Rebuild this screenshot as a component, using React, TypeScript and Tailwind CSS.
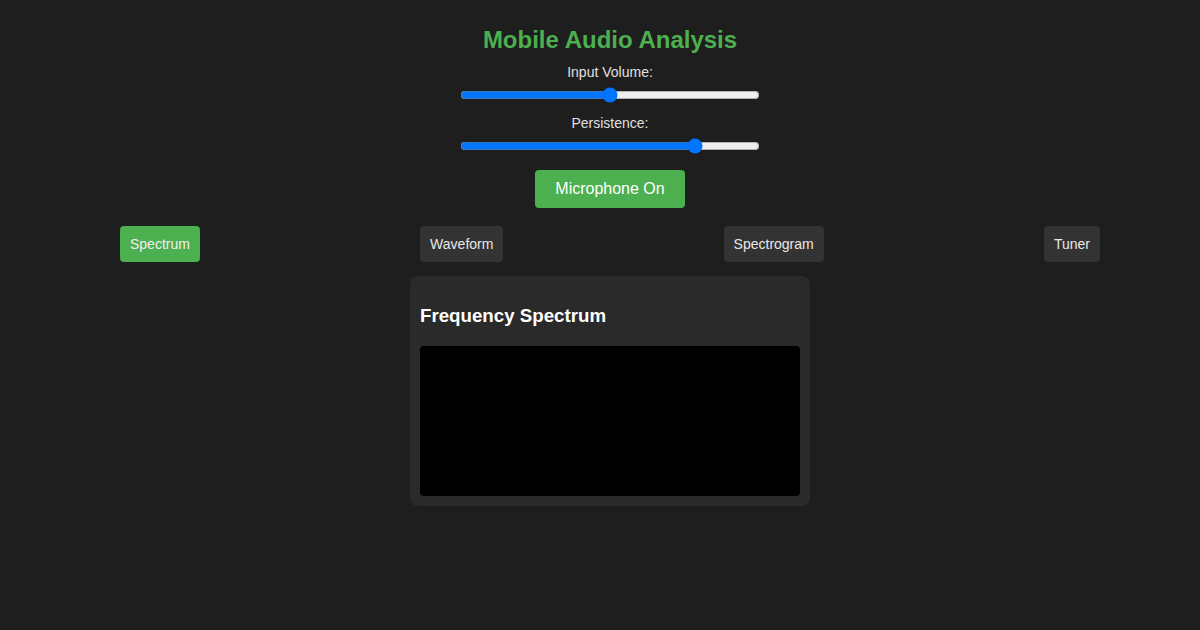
import { useState } from "react";

const tabs = ["Spectrum", "Waveform", "Spectrogram", "Tuner"];

export default function App() {
  const [volume, setVolume] = useState(50);
  const [persistence, setPersistence] = useState(80);
  const [active, setActive] = useState("Spectrum");

  return (
    <div
      className="min-h-[630px] bg-[#1e1e1e] pl-[20px] pt-[26px] text-[#e0e0e0]"
      style={{ fontFamily: '"Liberation Sans", Arial, sans-serif' }}
    >
      <div className="flex flex-col items-center">
        <h1 className="text-[24px] font-bold leading-[28px] text-[#4caf50]">
          Mobile Audio Analysis
        </h1>

        {/* Controls */}
        <label className="mt-[10px] block text-[14px] leading-[16px]">Input Volume:</label>
        <input
          type="range"
          min={0}
          max={100}
          value={volume}
          onChange={(e) => setVolume(Number(e.target.value))}
          className="mt-[7px] block h-[16px] w-[300px]"
        />
        <label className="mt-[12px] block text-[14px] leading-[16px]">Persistence:</label>
        <input
          type="range"
          min={0}
          max={100}
          value={persistence}
          onChange={(e) => setPersistence(Number(e.target.value))}
          className="mt-[7px] block h-[16px] w-[300px]"
        />

        <button className="mt-[16px] h-[38px] rounded-[4px] bg-[#4caf50] px-[20px] text-[16px] leading-[18px] text-white">
          Microphone On
        </button>
      </div>

      {/* Tabs */}
      <div className="mx-auto mt-[18px] flex max-w-[980px] justify-between">
        {tabs.map((t) => (
          <button
            key={t}
            onClick={() => setActive(t)}
            className={`h-[36px] rounded-[4px] px-[10px] text-[14px] leading-[16px] ${
              active === t ? "bg-[#4caf50] text-[#f0f0f0]" : "bg-[#333333] text-[#e8e8e8]"
            }`}
          >
            {t}
          </button>
        ))}
      </div>

      <div className="mt-[14px] flex justify-center">
        <div className="w-[400px] rounded-[8px] bg-[#2a2a2a] p-[10px]">
          <h3 className="my-[19px] text-[18.72px] font-bold leading-[22px] text-white">
            Frequency Spectrum
          </h3>
          <div className="h-[150px] w-[380px] rounded-[4px] bg-black" />
        </div>
      </div>
    </div>
  );
}
